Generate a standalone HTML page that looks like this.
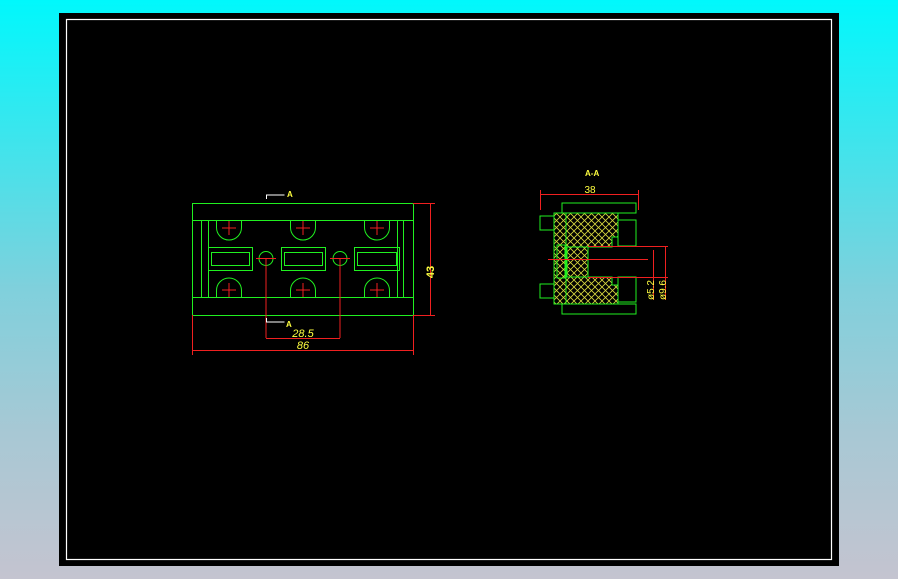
<!DOCTYPE html>
<html><head><meta charset="utf-8"><style>
html,body{margin:0;padding:0;width:898px;height:579px;overflow:hidden;background:linear-gradient(180deg,#00f8fc 0%,#40e4ec 25%,#80d0dc 50%,#a8c8d4 75%,#c4c4d0 100%);}
svg{position:absolute;left:0;top:0}
text{font-family:"Liberation Sans",sans-serif;fill:#ffff40}
</style></head><body>
<svg width="898" height="579" viewBox="0 0 898 579">
<defs>
<pattern id="h" width="7" height="7" patternUnits="userSpaceOnUse">
<rect width="7" height="7" fill="#000"/>
<path d="M0 0L7 7M7 0L0 7" stroke="#d8d840" stroke-width="0.8"/>
</pattern>
</defs>
<rect x="59" y="13" width="780" height="553" fill="#000"/>
<rect x="66.5" y="19.5" width="765" height="540" fill="none" stroke="#fff" stroke-width="1.2"/>
<g fill="none" stroke="#20f020" stroke-width="1">
<rect x="192.5" y="203.5" width="221" height="112"/>
<line x1="192" y1="220.5" x2="413" y2="220.5"/>
<line x1="192" y1="297.5" x2="413" y2="297.5"/>
<line x1="201.5" y1="220" x2="201.5" y2="297"/><line x1="208.5" y1="220" x2="208.5" y2="297"/>
<line x1="397.5" y1="220" x2="397.5" y2="297"/><line x1="403.5" y1="220" x2="403.5" y2="297"/>
<path d="M216.5 220.5v7A12.5 12.5 0 0 0 241.5 227.5v-7M290.5 220.5v7A12.5 12.5 0 0 0 315.5 227.5v-7M364.5 220.5v7A12.5 12.5 0 0 0 389.5 227.5v-7"/>
<path d="M216.5 297.5v-7A12.5 12.5 0 0 1 241.5 290.5v7M290.5 297.5v-7A12.5 12.5 0 0 1 315.5 290.5v7M364.5 297.5v-7A12.5 12.5 0 0 1 389.5 290.5v7"/>
<rect x="208.5" y="247.5" width="44" height="23"/><rect x="211.5" y="252.5" width="38" height="13"/>
<rect x="281.5" y="247.5" width="44" height="23"/><rect x="284.5" y="252.5" width="38" height="13"/>
<rect x="354.5" y="247.5" width="45" height="23"/><rect x="357.5" y="252.5" width="39" height="13"/>
<circle cx="266" cy="258.5" r="7"/><circle cx="340" cy="258.5" r="7"/>
</g>
<g stroke="#f02020" stroke-width="1">
<path d="M222 228h14M229 221v14M296 228h14M303 221v14M370 228h14M377 221v14"/>
<path d="M222 290h14M229 283v14M296 290h14M303 283v14M370 290h14M377 283v14"/>
<path d="M256 258.5h20M330 258.5h20M266 258v80M340 258v80"/>
<path d="M413 203.5h22M413 315.5h22M430.5 203v112M192.5 315v40M413.5 315v40M192 350.5h221M266 338.5h74"/>
</g>
<text x="418" y="268" font-size="11" font-weight="bold" transform="rotate(-90 428 262)" text-anchor="middle">43</text>
<text x="303" y="337" font-size="11" text-anchor="middle" font-style="italic">28.5</text>
<text x="303" y="349" font-size="11" text-anchor="middle" font-style="italic">86</text>
<g stroke="#fff" fill="none"><path d="M266.5 199v-4h18M266.5 318v4h18"/></g>
<text x="287" y="197" font-size="8" font-weight="bold">A</text><text x="286" y="327" font-size="8" font-weight="bold">A</text>
<text x="585" y="176" font-size="8" font-weight="bold">A-A</text>
<text x="590" y="193" font-size="10" text-anchor="middle">38</text>
<g stroke="#f02020" stroke-width="1"><path d="M540.5 194.5h98M540.5 190v20M638.5 190v20"/></g>
<path d="M562 213h74v-10h-74zM562 314h74v-10h-74z" fill="none" stroke="#20f020"/>
<path d="M566 213h52v24h-6v10h-24v30h24v8h6v19h-52z" fill="url(#h)" stroke="#20f020"/>
<rect x="554" y="213" width="12" height="91" fill="url(#h)" stroke="#20f020"/>
<g fill="none" stroke="#20f020">
<rect x="540" y="216" width="14" height="14"/><rect x="540" y="284" width="14" height="14"/>
<rect x="557" y="245" width="8" height="33"/>
<rect x="567" y="247" width="21" height="30"/>
<rect x="618" y="220" width="18" height="26"/><rect x="618" y="277" width="18" height="25"/>
</g>
<g stroke="#f02020" stroke-width="1" fill="none">
<path d="M588 246.5h80M588 277.5h80M548 259.5h100M653.5 250v50M665.5 246v54"/>
</g>
<text x="652" y="292" font-size="10" transform="rotate(-90 652 290)" text-anchor="middle">ø5.2</text>
<text x="664" y="292" font-size="10" transform="rotate(-90 664 290)" text-anchor="middle">ø9.6</text>
</svg>
</body></html>
